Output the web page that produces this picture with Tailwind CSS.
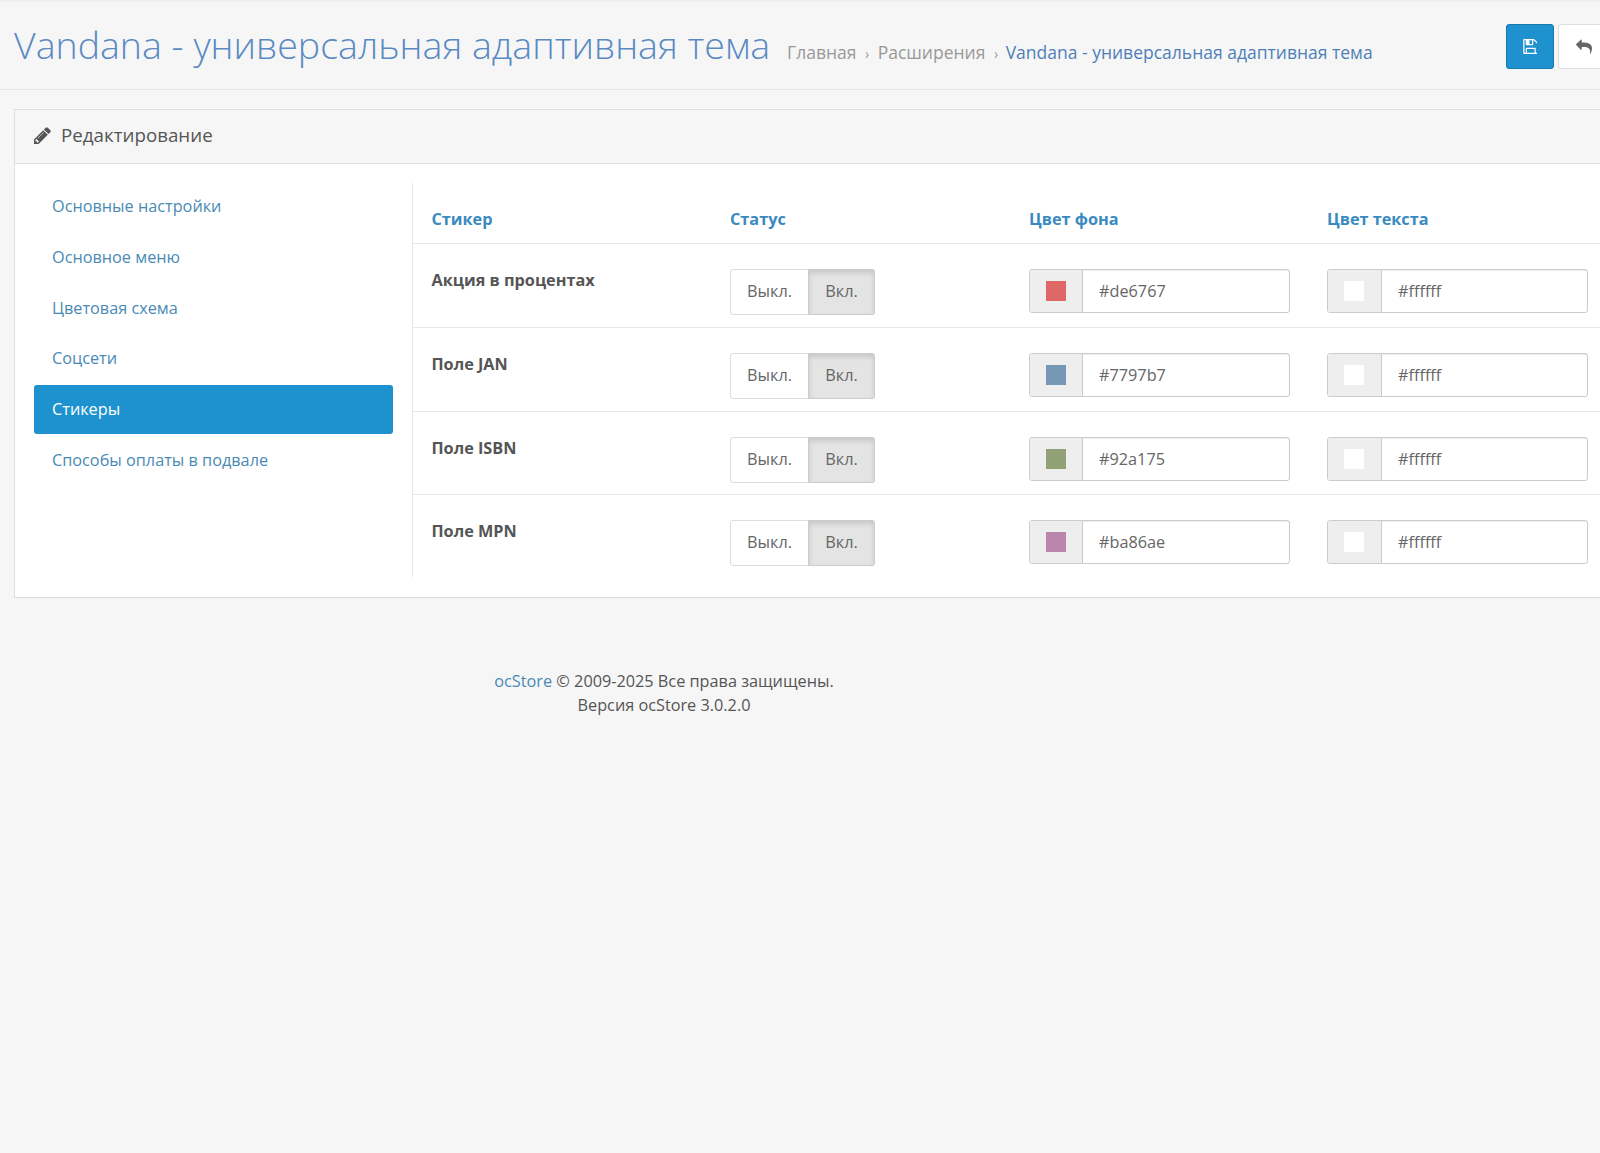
<!DOCTYPE html>
<html lang="ru">
<head>
    <meta charset="UTF-8">
    <meta name="viewport" content="width=device-width, initial-scale=1.0">
    <title>Vandana - универсальная адаптивная тема</title>
    <script src="https://cdn.jsdelivr.net/npm/@tailwindcss/browser@4"></script>
</head>
<body class="bg-[#f6f6f6] font-['Open_Sans',sans-serif] text-[16.25px] text-[#555] overflow-hidden h-[1153px] w-[1600px]">
    <div class="h-[2px] bg-[#eeeeee]"></div>

    <!-- page header -->
    <header class="flex h-[88px] w-[1600px] items-start justify-between border-b border-[#e8e8e8] pl-[14px] overflow-hidden">
        <div class="flex items-baseline pt-[18px] whitespace-nowrap">
            <h1 class="text-[37.5px] leading-[50px] font-light text-[#5a8ac2]">Vandana - универсальная адаптивная тема</h1>
            <ol class="ml-[17px] flex items-baseline text-[17.5px] text-[#999]">
                <li>Главная</li>
                <li class="px-[8.5px] text-[14px]">›</li>
                <li>Расширения</li>
                <li class="pl-[8.5px] pr-[7.5px] text-[14px]">›</li>
                <li class="text-[#4f7fb8]">Vandana - универсальная адаптивная тема</li>
            </ol>
        </div>
        <div class="flex gap-[4px] pt-[22px] shrink-0 w-[94px]">
            <button class="flex h-[45px] w-[48px] shrink-0 items-center justify-center rounded-[3px] border border-[#1978ab] bg-[#1e91cf] pr-[2px]">
                <svg class="h-[15px] w-[15px] fill-white" viewBox="0 128 1536 1536"><path d="M512 1536h768v-384h-768v384zm896 0h128v-896q0-14-10-38.5t-20-34.5l-281-281q-10-10-34-20t-39-10v416q0 40-28 68t-68 28h-576q-40 0-68-28t-28-68v-416h-128v1280h128v-416q0-40 28-68t68-28h832q40 0 68 28t28 68v416zm-384-928v-320q0-13-9.5-22.5t-22.5-9.5h-192q-13 0-22.5 9.5t-9.5 22.5v320q0 13 9.5 22.5t22.5 9.5h192q13 0 22.5-9.5t9.5-22.5zm640 32v928q0 40-28 68t-68 28h-1344q-40 0-68-28t-28-68v-1344q0-40 28-68t68-28h928q40 0 88 20t76 48l280 280q28 28 48 76t20 88z"/></svg>
            </button>
            <button class="flex h-[45px] w-[52px] shrink-0 items-center justify-center rounded-[3px] border border-[#ddd] bg-white">
                <svg class="h-[16px] w-[16px] fill-[#666]" viewBox="0 0 1792 1792"><path d="M1792 1120q0 166-127 451-3 7-10.5 24t-13.5 30-13 22q-12 17-28 17-15 0-23.5-10t-8.5-25q0-9 2.5-26.5t2.5-23.5q5-68 5-123 0-101-17.5-181t-48.5-138.5-80-101-105.5-69.5-133-42.5-154-21.5-175.5-6h-224v256q0 26-19 45t-45 19-45-19l-512-512q-19-19-19-45t19-45l512-512q19-19 45-19t45 19 19 45v256h224q713 0 875 403 53 134 53 333z"/></svg>
            </button>
        </div>
    </header>

    <!-- panel -->
    <section class="ml-[14px] mt-[19px] w-[1640px] border border-[#dddddd] bg-white">
        <div class="flex h-[54px] items-center gap-[10px] border-b border-[#dddddd] bg-[#f6f6f6] pb-[2px] pl-[19px] text-[18.75px] text-[#555]">
            <svg class="h-[17px] w-[17px] fill-[#555]" viewBox="128 128 1536 1536"><path d="M491 1536l91-91-235-235-91 91v107h128v128h107zm523-928q0-22-22-22-10 0-17 7l-542 542q-7 7-7 17 0 22 22 22 10 0 17-7l542-542q7-7 7-17zm-54-192l416 416-832 832h-416v-416zm683 96q0 53-37 90l-166 166-416-416 166-165q36-38 90-38 53 0 91 38l235 234q37 39 37 91z"/></svg>
            <span>Редактирование</span>
        </div>

        <div class="flex pt-[19px] pb-[20px] pl-[19px]">
            <!-- left tabs -->
            <nav class="-mt-px w-[378px] shrink-0 pr-[19px] flex flex-col gap-[2px] text-[#4a8ab5]">
                <a class="flex h-[48.75px] items-center rounded-[3px] px-[18px]">Основные настройки</a>
                <a class="flex h-[48.75px] items-center rounded-[3px] px-[18px]">Основное меню</a>
                <a class="flex h-[48.75px] items-center rounded-[3px] px-[18px]">Цветовая схема</a>
                <a class="flex h-[48.75px] items-center rounded-[3px] px-[18px]">Соцсети</a>
                <a class="flex h-[48.75px] items-center rounded-[3px] bg-[#1e91cf] px-[18px] text-white">Стикеры</a>
                <a class="flex h-[48.75px] items-center rounded-[3px] px-[18px]">Способы оплаты в подвале</a>
            </nav>

            <!-- stickers table -->
            <div class="w-[1228px] border-l border-[#e8e8e8]">
                <div class="grid h-[61px] grid-cols-[299px_299px_298px_1fr] items-center border-b border-[#e8e8e8] pt-[12px] font-bold text-[#3a8abf]">
                    <div class="pl-[18.5px]">Стикер</div>
                    <div class="pl-[18px]">Статус</div>
                    <div class="pl-[18px]">Цвет фона</div>
                    <div class="pl-[18px]">Цвет текста</div>
                </div>

                <div class="grid h-[84px] grid-cols-[299px_299px_298px_1fr] border-b border-[#e8e8e8] pt-[25px]">
                    <div class="pl-[18.5px] pt-[1px] font-bold leading-[20px] text-[#555]">Акция в процентах</div>
                    <div class="pl-[18px]">
                        <div class="flex h-[46px] w-[145px] rounded-[3px] border border-[#ddd] text-[#666]">
                            <span class="flex w-[77px] items-center justify-center pb-[2px]">Выкл.</span>
                            <span class="-my-px -mr-px flex flex-1 items-center justify-center rounded-r-[3px] border border-[#ccc] bg-[#e4e4e4] pb-[2px] shadow-[inset_0_3px_5px_rgba(0,0,0,0.125)]">Вкл.</span>
                        </div>
                    </div>
                    <div class="pl-[18px]">
                        <div class="flex h-[44px] w-[261px] rounded-[3px] border border-[#ccc] text-[#666]">
                            <span class="flex w-[53px] items-center justify-center rounded-l-[3px] border-r border-[#ccc] bg-[#eeeeee]"><i class="h-[20px] w-[20px] bg-[#de6767]"></i></span>
                            <span class="flex flex-1 items-center px-[16px] shadow-[inset_0_1px_1px_rgba(0,0,0,0.075)]">#de6767</span>
                        </div>
                    </div>
                    <div class="pl-[18px]">
                        <div class="flex h-[44px] w-[261px] rounded-[3px] border border-[#ccc] text-[#666]">
                            <span class="flex w-[54px] items-center justify-center rounded-l-[3px] border-r border-[#ccc] bg-[#eeeeee] pr-[1px]"><i class="h-[20px] w-[20px] bg-white"></i></span>
                            <span class="flex flex-1 items-center px-[16px] shadow-[inset_0_1px_1px_rgba(0,0,0,0.075)]">#ffffff</span>
                        </div>
                    </div>
                </div>

                <div class="grid h-[84px] grid-cols-[299px_299px_298px_1fr] border-b border-[#e8e8e8] pt-[25px]">
                    <div class="pl-[18.5px] pt-[1px] font-bold leading-[20px] text-[#555]">Поле JAN</div>
                    <div class="pl-[18px]">
                        <div class="flex h-[46px] w-[145px] rounded-[3px] border border-[#ddd] text-[#666]">
                            <span class="flex w-[77px] items-center justify-center pb-[2px]">Выкл.</span>
                            <span class="-my-px -mr-px flex flex-1 items-center justify-center rounded-r-[3px] border border-[#ccc] bg-[#e4e4e4] pb-[2px] shadow-[inset_0_3px_5px_rgba(0,0,0,0.125)]">Вкл.</span>
                        </div>
                    </div>
                    <div class="pl-[18px]">
                        <div class="flex h-[44px] w-[261px] rounded-[3px] border border-[#ccc] text-[#666]">
                            <span class="flex w-[53px] items-center justify-center rounded-l-[3px] border-r border-[#ccc] bg-[#eeeeee]"><i class="h-[20px] w-[20px] bg-[#7797b7]"></i></span>
                            <span class="flex flex-1 items-center px-[16px] shadow-[inset_0_1px_1px_rgba(0,0,0,0.075)]">#7797b7</span>
                        </div>
                    </div>
                    <div class="pl-[18px]">
                        <div class="flex h-[44px] w-[261px] rounded-[3px] border border-[#ccc] text-[#666]">
                            <span class="flex w-[54px] items-center justify-center rounded-l-[3px] border-r border-[#ccc] bg-[#eeeeee] pr-[1px]"><i class="h-[20px] w-[20px] bg-white"></i></span>
                            <span class="flex flex-1 items-center px-[16px] shadow-[inset_0_1px_1px_rgba(0,0,0,0.075)]">#ffffff</span>
                        </div>
                    </div>
                </div>

                <div class="grid h-[83px] grid-cols-[299px_299px_298px_1fr] border-b border-[#e8e8e8] pt-[25px]">
                    <div class="pl-[18.5px] pt-[1px] font-bold leading-[20px] text-[#555]">Поле ISBN</div>
                    <div class="pl-[18px]">
                        <div class="flex h-[46px] w-[145px] rounded-[3px] border border-[#ddd] text-[#666]">
                            <span class="flex w-[77px] items-center justify-center pb-[2px]">Выкл.</span>
                            <span class="-my-px -mr-px flex flex-1 items-center justify-center rounded-r-[3px] border border-[#ccc] bg-[#e4e4e4] pb-[2px] shadow-[inset_0_3px_5px_rgba(0,0,0,0.125)]">Вкл.</span>
                        </div>
                    </div>
                    <div class="pl-[18px]">
                        <div class="flex h-[44px] w-[261px] rounded-[3px] border border-[#ccc] text-[#666]">
                            <span class="flex w-[53px] items-center justify-center rounded-l-[3px] border-r border-[#ccc] bg-[#eeeeee]"><i class="h-[20px] w-[20px] bg-[#92a175]"></i></span>
                            <span class="flex flex-1 items-center px-[16px] shadow-[inset_0_1px_1px_rgba(0,0,0,0.075)]">#92a175</span>
                        </div>
                    </div>
                    <div class="pl-[18px]">
                        <div class="flex h-[44px] w-[261px] rounded-[3px] border border-[#ccc] text-[#666]">
                            <span class="flex w-[54px] items-center justify-center rounded-l-[3px] border-r border-[#ccc] bg-[#eeeeee] pr-[1px]"><i class="h-[20px] w-[20px] bg-white"></i></span>
                            <span class="flex flex-1 items-center px-[16px] shadow-[inset_0_1px_1px_rgba(0,0,0,0.075)]">#ffffff</span>
                        </div>
                    </div>
                </div>

                <div class="grid h-[82px] grid-cols-[299px_299px_298px_1fr] pt-[25px]">
                    <div class="pl-[18.5px] pt-[1px] font-bold leading-[20px] text-[#555]">Поле MPN</div>
                    <div class="pl-[18px]">
                        <div class="flex h-[46px] w-[145px] rounded-[3px] border border-[#ddd] text-[#666]">
                            <span class="flex w-[77px] items-center justify-center pb-[2px]">Выкл.</span>
                            <span class="-my-px -mr-px flex flex-1 items-center justify-center rounded-r-[3px] border border-[#ccc] bg-[#e4e4e4] pb-[2px] shadow-[inset_0_3px_5px_rgba(0,0,0,0.125)]">Вкл.</span>
                        </div>
                    </div>
                    <div class="pl-[18px]">
                        <div class="flex h-[44px] w-[261px] rounded-[3px] border border-[#ccc] text-[#666]">
                            <span class="flex w-[53px] items-center justify-center rounded-l-[3px] border-r border-[#ccc] bg-[#eeeeee]"><i class="h-[20px] w-[20px] bg-[#ba86ae]"></i></span>
                            <span class="flex flex-1 items-center px-[16px] shadow-[inset_0_1px_1px_rgba(0,0,0,0.075)]">#ba86ae</span>
                        </div>
                    </div>
                    <div class="pl-[18px]">
                        <div class="flex h-[44px] w-[261px] rounded-[3px] border border-[#ccc] text-[#666]">
                            <span class="flex w-[54px] items-center justify-center rounded-l-[3px] border-r border-[#ccc] bg-[#eeeeee] pr-[1px]"><i class="h-[20px] w-[20px] bg-white"></i></span>
                            <span class="flex flex-1 items-center px-[16px] shadow-[inset_0_1px_1px_rgba(0,0,0,0.075)]">#ffffff</span>
                        </div>
                    </div>
                </div>
            </div>
        </div>
    </section>

    <footer class="mt-[71px] w-[1328px] text-center leading-[24px]">
        <a class="text-[#4a8ab5]">ocStore</a> © 2009-2025 Все права защищены.<br>
        Версия ocStore 3.0.2.0
    </footer>
</body>
</html>
